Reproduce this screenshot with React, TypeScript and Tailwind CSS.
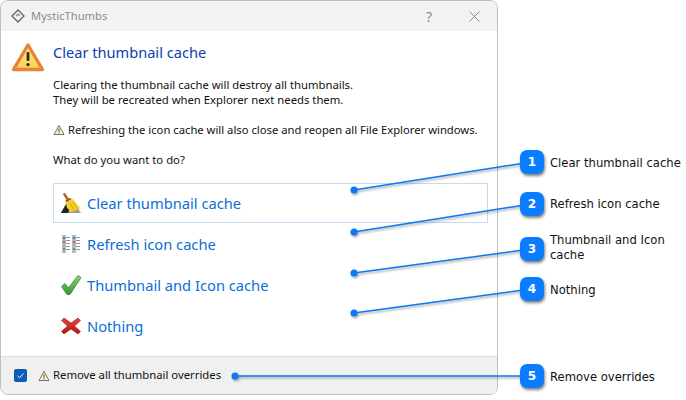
import React from 'react';

const uiFont = "font-['Noto_Sans','Open_Sans',sans-serif]";

const WarnBig = () => (
  <svg width="34" height="30" viewBox="0 0 34 30">
    <defs>
      <linearGradient id="wb" x1="0" y1="0" x2="0" y2="1">
        <stop offset="0" stopColor="#ffe98a" />
        <stop offset="1" stopColor="#fbd154" />
      </linearGradient>
    </defs>
    <path d="M17 3 L31.5 27.5 L2.5 27.5 Z" fill="url(#wb)" stroke="#e8843a" strokeWidth="3.4" strokeLinejoin="round" />
    <rect x="15.6" y="10" width="2.8" height="9" rx="1" fill="#3b2a10" />
    <circle cx="17" cy="22.6" r="1.7" fill="#3b2a10" />
  </svg>
);

const WarnSmall = () => (
  <svg width="12" height="12" viewBox="0 0 12 12">
    <path d="M6 1.5 L11 10.5 L1 10.5 Z" fill="#fdf3cf" stroke="#77716a" strokeWidth="1" strokeLinejoin="round" />
    <rect x="5.5" y="4.5" width="1" height="3.2" fill="#444" />
    <rect x="5.5" y="8.3" width="1" height="1" fill="#444" />
  </svg>
);

const Broom = () => (
  <svg width="22" height="22" viewBox="0 0 24 24">
    <path d="M1 23 L8 11 L16 13 L23 23 Z" fill="#9a9a9a" />
    <path d="M1 23 L8 11 L11 14 L9 23 Z" fill="#222" />
    <path d="M3 2 L5.5 1 L10 8 L7.5 9.5 Z" fill="#a56a1e" />
    <path d="M6 9.5 L11 6.5 L14 8 L22.5 18 L12 22 L7.5 17 Z" fill="#f5cf2b" />
    <path d="M6 9.5 L11 6.5 L12.2 7.6 L7 11 Z" fill="#b3261d" />
    <path d="M11 12 L15.5 20.5 M14 11 L19 19.5" stroke="#d19f12" strokeWidth="1" />
  </svg>
);

const IconList = () => (
  <svg width="20" height="20" viewBox="0 0 20 20">
    {[1, 11].map((x) => (
      <g key={x}>
        <rect x={x} y="1" width="4" height="18" fill="#a9bdd3" />
        <rect x={x + 1} y="3" width="2" height="2" fill="#4f79b5" />
        <rect x={x + 1} y="7" width="2" height="2" fill="#d9534a" />
        <rect x={x + 1} y="10" width="2" height="2" fill="#e9a23b" />
        <rect x={x + 1} y="14" width="2" height="2" fill="#5b9b57" />
        <path d={`M${x + 4} 3.5h4M${x + 4} 6.5h4M${x + 4} 9.5h4M${x + 4} 12.5h4M${x + 4} 15.5h4`} stroke="#959595" strokeWidth="1" />
      </g>
    ))}
  </svg>
);

const BigCheck = () => (
  <svg width="22" height="22" viewBox="0 0 22 22">
    <defs>
      <linearGradient id="gc" x1="0" y1="0" x2="0" y2="1">
        <stop offset="0" stopColor="#8fd86a" />
        <stop offset="1" stopColor="#2f9a37" />
      </linearGradient>
    </defs>
    <path d="M1.5 12.5 L5 9.5 L8.5 14 L18 1.5 L21 3.5 L10 20.5 L7 20.5 Z" fill="url(#gc)" stroke="#3b7d3f" strokeWidth="0.8" strokeLinejoin="round" />
  </svg>
);

const BigX = () => (
  <svg width="20" height="18" viewBox="0 0 20 18">
    <defs>
      <linearGradient id="gx" x1="0" y1="0" x2="0" y2="1">
        <stop offset="0" stopColor="#f0433a" />
        <stop offset="1" stopColor="#b01516" />
      </linearGradient>
    </defs>
    <path d="M3 1 L10 6 L17 1 L19.5 3.5 L13.5 9 L19.5 14.5 L17 17 L10 12 L3 17 L0.5 14.5 L6.5 9 L0.5 3.5 Z" fill="url(#gx)" stroke="#8c1c1c" strokeWidth="0.6" strokeLinejoin="round" />
  </svg>
);

const options = [
  { label: 'Clear thumbnail cache', icon: <Broom />, active: true },
  { label: 'Refresh icon cache', icon: <IconList />, active: false },
  { label: 'Thumbnail and Icon cache', icon: <BigCheck />, active: false },
  { label: 'Nothing', icon: <BigX />, active: false },
];

const callouts = [
  { n: 1, top: 'top-[150px]', label: 'Clear thumbnail cache', labelTop: 'top-[156px]' },
  { n: 2, top: 'top-[192px]', label: 'Refresh icon cache', labelTop: 'top-[197px]' },
  { n: 3, top: 'top-[237px]', label: 'Thumbnail and Icon cache', labelTop: 'top-[233px]' },
  { n: 4, top: 'top-[277px]', label: 'Nothing', labelTop: 'top-[283px]' },
  { n: 5, top: 'top-[364px]', label: 'Remove overrides', labelTop: 'top-[370px]' },
];

const lines = [
  [354, 190, 531, 162],
  [354, 232, 531, 204],
  [354, 273, 531, 249],
  [354, 313, 531, 289],
  [235, 376, 531, 376],
];

export default function App() {
  return (
    <div className="relative w-[686px] h-[400px] bg-white overflow-hidden">
      {/* Dialog */}
      <div className={`w-[498px] h-[395px] flex flex-col border border-[#bfbfbf] rounded-lg overflow-hidden bg-white ${uiFont}`}>
        <div className="h-[30px] shrink-0 flex items-center bg-[#f3f3f3] pl-[10px]">
          <svg width="14" height="14" viewBox="0 0 14 14">
            <path d="M7 1 L13 7 L7 13 L1 7 Z" fill="none" stroke="#666" strokeWidth="1.4" />
            <path d="M5 7 L7 5 L9 7" fill="none" stroke="#888" strokeWidth="1.2" />
          </svg>
          <span className="ml-[6px] text-[11.2px] text-[#8c8c8c]">MysticThumbs</span>
          <span className="ml-auto text-[14px] text-[#8c8c8c]">?</span>
          <svg className="ml-[37px] mr-[17px]" width="11" height="11" viewBox="0 0 11 11">
            <path d="M0.5 0.5 L10.5 10.5 M10.5 0.5 L0.5 10.5" stroke="#8a8a8a" strokeWidth="1" />
          </svg>
        </div>

        <div className="flex-1 flex flex-col min-h-0">
          <div className="flex pl-[10px] pt-[11px]">
            <WarnBig />
            <div className="ml-[8px]">
              <div className="text-[14.6px] leading-[20px] text-[#0a3fb0]">Clear thumbnail cache</div>
              <p className="mt-[15px] text-[11.3px] leading-[15px] text-[#111]">
                Clearing the thumbnail cache will destroy all thumbnails.
                <br />
                They will be recreated when Explorer next needs them.
              </p>
              <p className="mt-[15px] flex items-center gap-[3px] text-[11.25px] leading-[15px] text-[#111] whitespace-nowrap">
                <WarnSmall />
                Refreshing the icon cache will also close and reopen all File Explorer windows.
              </p>
              <p className="mt-[15px] text-[11.3px] leading-[15px] text-[#111]">What do you want to do?</p>
            </div>
          </div>

          <div className="ml-[52px] mt-[16px] w-[435px] flex flex-col gap-px">
            {options.map((o) => (
              <div
                key={o.label}
                className={`h-[40px] flex items-center border ${o.active ? 'border-[#c3dcf2]' : 'border-transparent'}`}
              >
                <div className="w-[33px] flex justify-center shrink-0">{o.icon}</div>
                <span className="text-[14.7px] text-[#0b6fd8]">{o.label}</span>
              </div>
            ))}
          </div>
        </div>

        <div className="h-[38px] shrink-0 flex items-center bg-[#f0f0f0] border-t border-[#dcdcdc] pl-[13px]">
          <div className="w-[13px] h-[13px] rounded-[2px] bg-[#0b5cb8] flex items-center justify-center">
            <svg width="9" height="9" viewBox="0 0 9 9">
              <path d="M1.5 4.8 L3.6 6.8 L7.5 2.4" fill="none" stroke="#fff" strokeWidth="1" />
            </svg>
          </div>
          <span className="ml-[11px]"><WarnSmall /></span>
          <span className="ml-[3px] text-[11.3px] text-[#111]">Remove all thumbnail overrides</span>
        </div>
      </div>

      {/* Callout leader lines */}
      <svg className="absolute left-0 top-0" width="686" height="400" viewBox="0 0 686 400">
        <defs>
          <filter id="ds" x="-20%" y="-200%" width="140%" height="500%">
            <feDropShadow dx="1" dy="1.5" stdDeviation="1" floodColor="#000" floodOpacity="0.4" />
          </filter>
        </defs>
        {lines.map(([x1, y1, x2, y2]) => (
          <g key={y1} filter="url(#ds)">
            <line x1={x1} y1={y1} x2={x2} y2={y2} stroke="#0a78f0" strokeWidth="1.5" />
            <circle cx={x1} cy={y1} r="3.5" fill="#0a78f0" />
          </g>
        ))}
      </svg>

      {/* Callout badges */}
      {callouts.map((c) => (
        <React.Fragment key={c.n}>
          <div
            className={`absolute left-[520px] ${c.top} w-[24px] h-[24px] rounded-[7px] bg-[#0a7cff] shadow-[1px_2px_3px_rgba(0,0,0,0.5)] flex items-center justify-center text-white text-[12px] font-bold font-['DejaVu_Sans',sans-serif]`}
          >
            {c.n}
          </div>
          <div
            className={`absolute left-[550px] ${c.labelTop} w-[134px] text-[11.6px] leading-[15px] text-[#111] font-['DejaVu_Sans',sans-serif]`}
          >
            {c.label}
          </div>
        </React.Fragment>
      ))}
    </div>
  );
}
